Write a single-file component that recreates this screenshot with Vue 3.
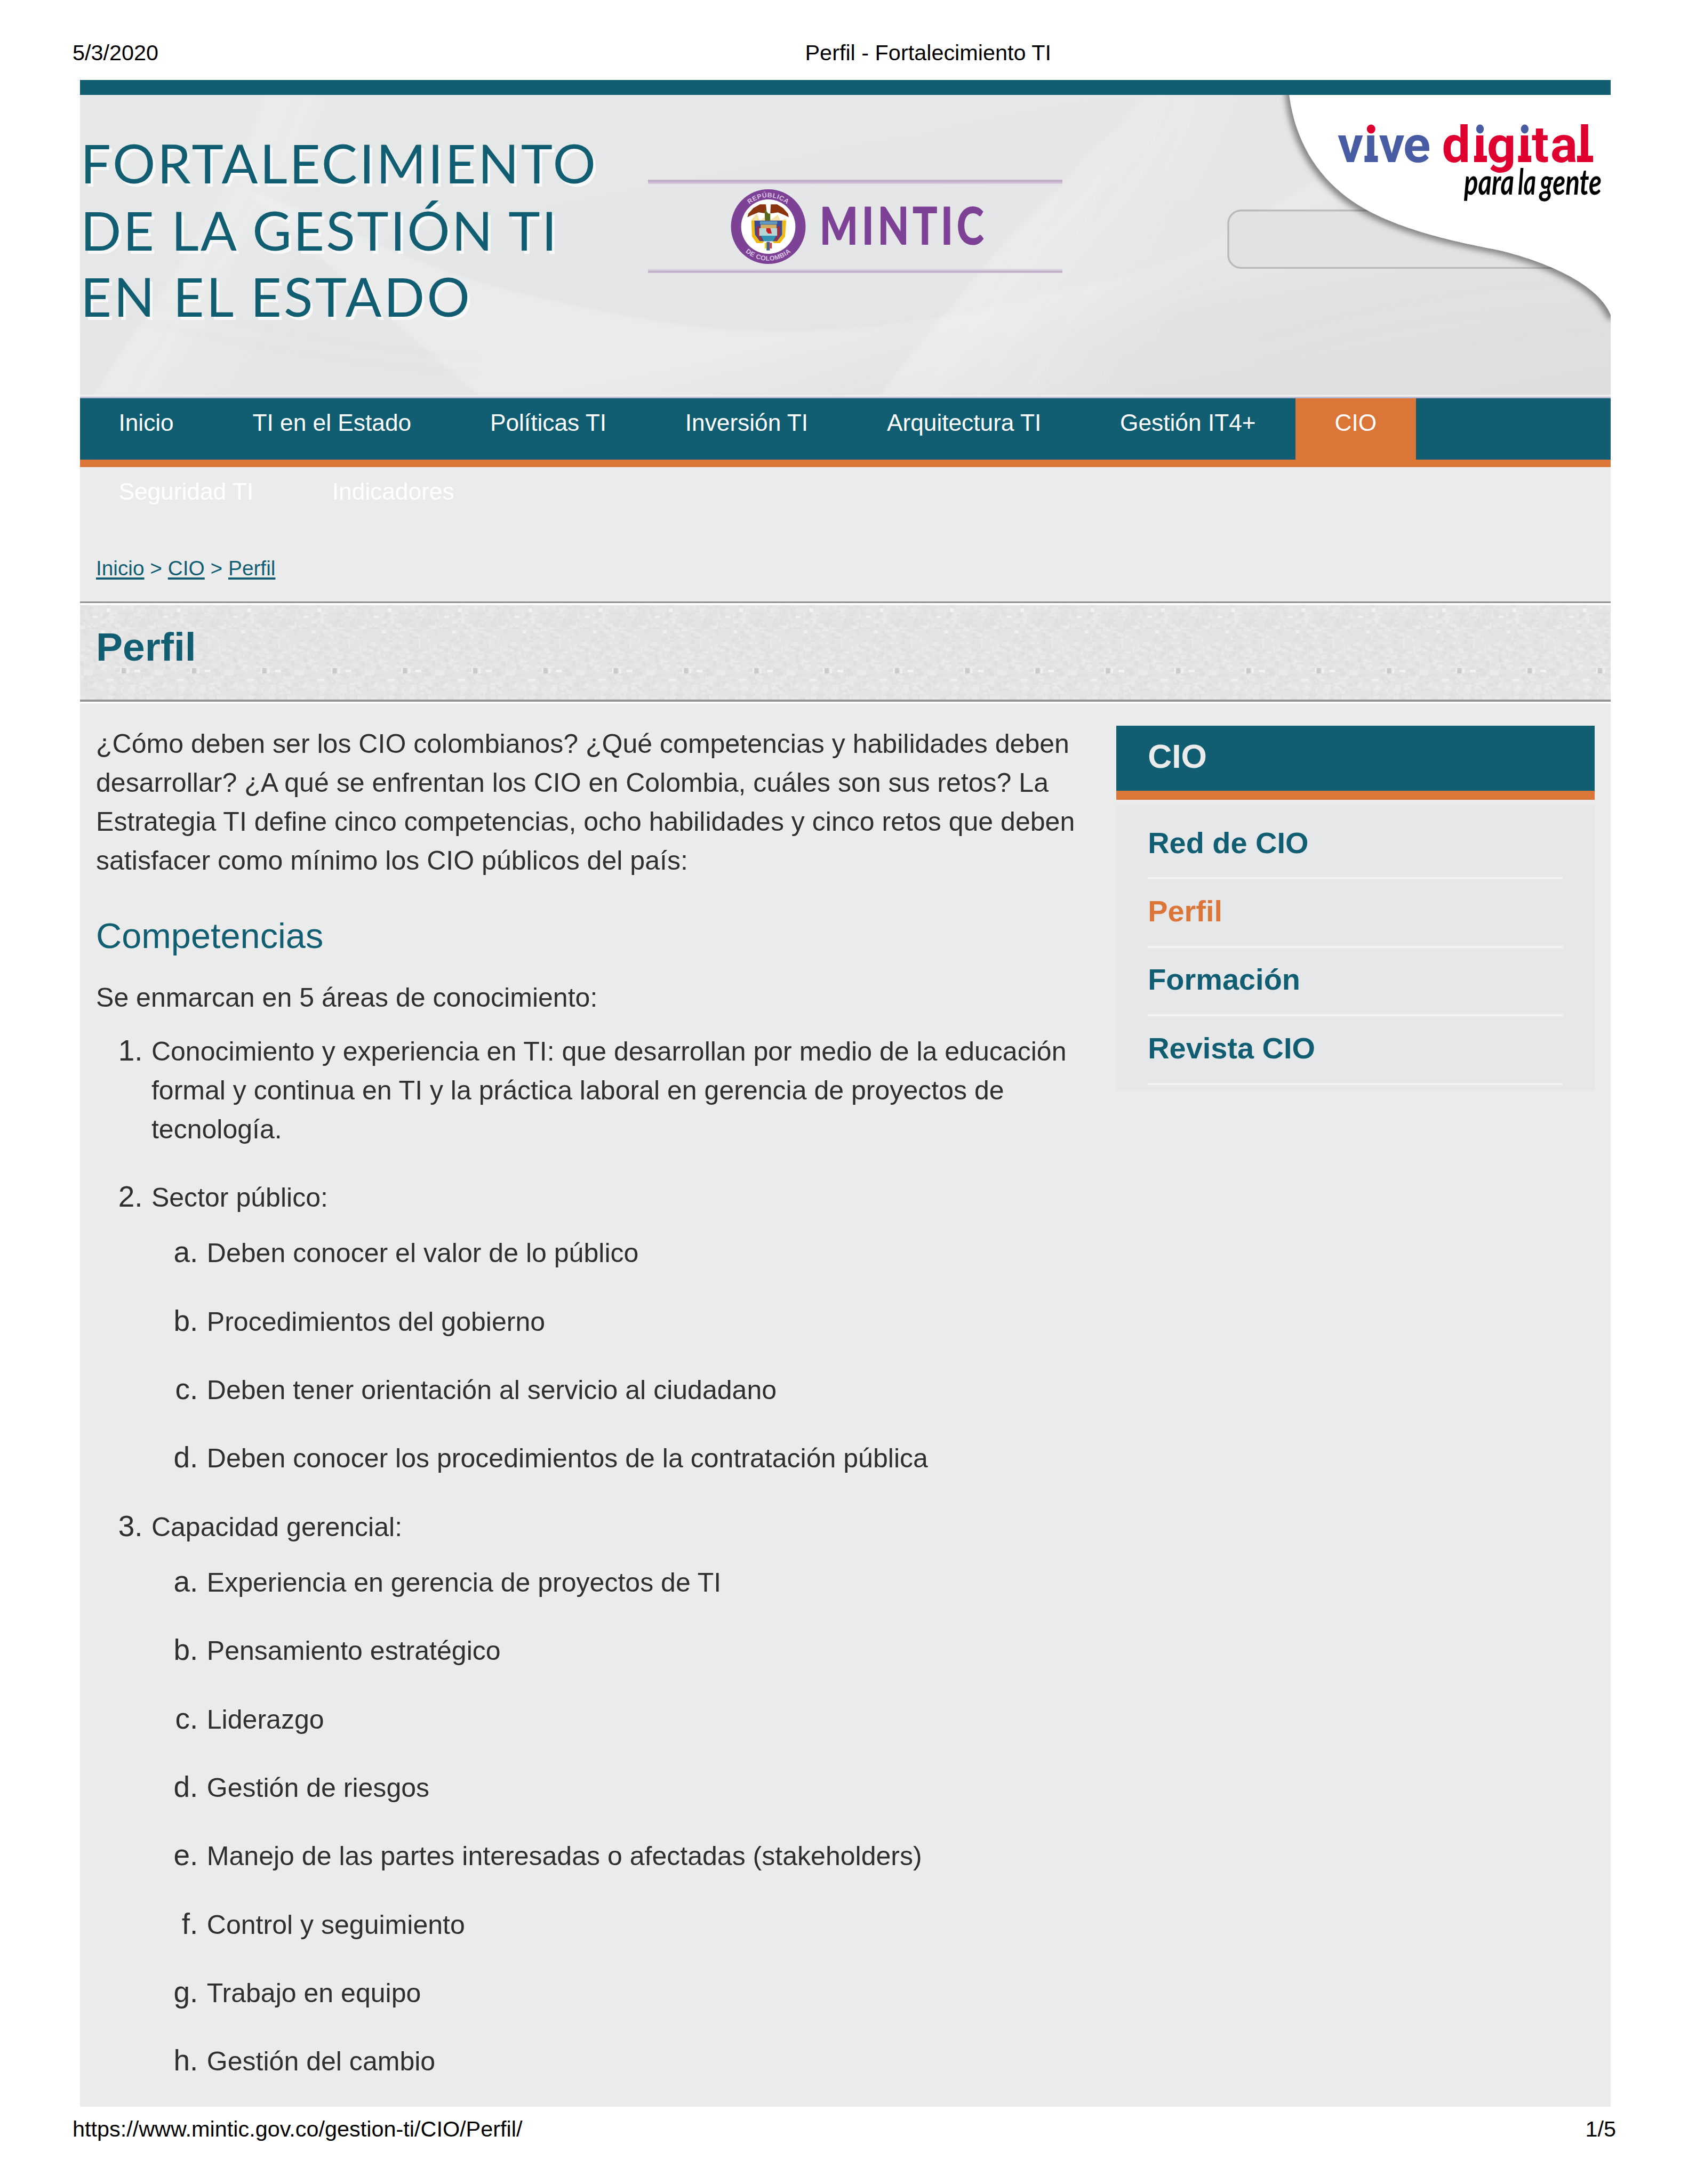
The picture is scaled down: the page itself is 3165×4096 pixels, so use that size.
<script setup>
const menu = [
  'Inicio', 'TI en el Estado', 'Políticas TI', 'Inversión TI', 'Arquitectura TI',
  'Gestión IT4+', 'CIO', 'Seguridad TI', 'Indicadores',
]
const sideLinks = ['Red de CIO', 'Perfil', 'Formación', 'Revista CIO']

const areas = [
  {
    lines: [
      'Conocimiento y experiencia en TI: que desarrollan por medio de la educación',
      'formal y continua en TI y la práctica laboral en gerencia de proyectos de',
      'tecnología.',
    ],
  },
  {
    lines: ['Sector público:'],
    sub: [
      'Deben conocer el valor de lo público',
      'Procedimientos del gobierno',
      'Deben tener orientación al servicio al ciudadano',
      'Deben conocer los procedimientos de la contratación pública',
    ],
  },
  {
    lines: ['Capacidad gerencial:'],
    sub: [
      'Experiencia en gerencia de proyectos de TI',
      'Pensamiento estratégico',
      'Liderazgo',
      'Gestión de riesgos',
      'Manejo de las partes interesadas o afectadas (stakeholders)',
      'Control y seguimiento',
      'Trabajo en equipo',
      'Gestión del cambio',
    ],
  },
]
const letter = (i) => String.fromCharCode(97 + i)

// Paper grain of the title band: one tile of small specks, repeated
let seed = 7
const rand = () => (seed = (seed * 16807) % 2147483647) / 2147483647
const px = 3.47
const tones = ['#e0dddd', '#e0dede', '#e9e8e8', '#ececec', '#dedcdc', '#ebebeb']
const specks = Array.from({ length: 420 }, () => ({
  x: Math.floor(rand() * 38) * px,
  y: Math.floor(rand() * 51) * px,
  w: (1 + Math.floor(rand() * 3)) * px,
  h: (1 + Math.floor(rand() * 2)) * px,
  c: tones[Math.floor(rand() * tones.length)],
}))
</script>

<template>
  <div class="sheet">
    <div class="sheet-head">
      <span class="date">5/3/2020</span>
      <span>Perfil - Fortalecimiento TI</span>
    </div>

    <div class="frame">
      <div class="top-bar"></div>

      <svg class="banner" viewBox="150 177.5 2870 566" width="2870" height="566">
        <defs>
          <linearGradient id="bg" x1="0" y1="0" x2="1" y2="1">
            <stop offset="0" stop-color="#e7e8e8" />
            <stop offset=".6" stop-color="#e4e5e6" />
            <stop offset="1" stop-color="#dcdddf" />
          </linearGradient>
          <linearGradient id="beamL" gradientUnits="userSpaceOnUse" x1="330" y1="430" x2="560" y2="520">
            <stop offset="0" stop-color="#fff" stop-opacity=".2" />
            <stop offset="1" stop-color="#fff" stop-opacity="0" />
          </linearGradient>
          <linearGradient id="beamR" gradientUnits="userSpaceOnUse" x1="1890" y1="430" x2="2230" y2="560">
            <stop offset="0" stop-color="#fff" stop-opacity=".22" />
            <stop offset="1" stop-color="#fff" stop-opacity="0" />
          </linearGradient>
          <linearGradient id="arc" gradientUnits="userSpaceOnUse" x1="1700" y1="560" x2="1760" y2="743">
            <stop offset="0" stop-color="#fff" stop-opacity=".22" />
            <stop offset="1" stop-color="#fff" stop-opacity="0" />
          </linearGradient>
          <filter id="soft" x="-20%" y="-20%" width="140%" height="140%">
            <feGaussianBlur stdDeviation="8" />
          </filter>
          <filter id="edge" x="-5%" y="-5%" width="110%" height="110%">
            <feGaussianBlur stdDeviation="4" />
          </filter>
          <filter id="lift" x="-10%" y="-10%" width="120%" height="120%">
            <feDropShadow dx="-7" dy="6" stdDeviation="6" flood-color="#000" flood-opacity=".42" />
          </filter>
        </defs>
        <rect x="150" y="177.5" width="2870" height="566" fill="url(#bg)" />
        <g filter="url(#edge)">
          <path d="M496 177C461 300 411 373 347 478C300 560 230 650 176 743H520C500 600 560 400 700 177Z" fill="url(#beamL)" />
          <path d="M2150 177C2080 260 2030 290 1991 349C1930 400 1870 470 1824 523C1750 620 1690 680 1649 743H2200C2190 560 2250 330 2330 177Z" fill="url(#beamR)" />
          <path d="M450 350C560 390 640 425 731 469C900 540 1000 555 1117 582C1231 603 1330 621 1444 621C1560 621 1620 615 1687 605C1780 590 1850 580 1922 560C2000 540 2060 530 2105 516C2200 490 2260 460 2308 427C2380 390 2430 360 2500 320L2560 743H900Z" fill="url(#arc)" />
        </g>
        <g stroke="#fff" fill="none" stroke-width="5" opacity=".2" filter="url(#soft)">
          <path d="M2180 177C2130 300 1900 480 1740 743" />
          <path d="M2215 177C2180 330 1960 500 1830 743" />
          <path d="M2240 177C2200 360 2050 520 1920 743" />
          <path d="M530 177C480 370 330 560 210 743" />
          <path d="M580 177C500 400 360 560 260 743" />
        </g>
        <g stroke="#cfd1d3" fill="none" stroke-width="5" opacity=".18" filter="url(#edge)">
          <path d="M150 540C400 590 600 650 900 670" />
          <path d="M150 580C400 630 600 680 900 700" />
          <path d="M2360 640C2600 560 2800 540 3020 520" />
          <path d="M2360 680C2600 600 2800 580 3020 570" />
          <path d="M2360 720C2600 650 2800 630 3020 620" />
        </g>
        <rect x="150" y="740" width="2870" height="3.5" fill="#f0eff2" />

        <g class="site-name">
          <g fill="#f8f8f8" transform="translate(5 6)" aria-hidden="true">
            <use href="#l1" /><use href="#l2" /><use href="#l3" />
          </g>
          <g fill="#115e73">
            <text id="l1" x="151" y="343.8" textLength="966">FORTALECIMIENTO</text>
            <text id="l2" x="151" y="469" textLength="893">DE LA GESTIÓN TI</text>
            <text id="l3" x="151" y="593.6" textLength="730">EN EL ESTADO</text>
          </g>
        </g>

        <!-- MINTIC -->
        <rect x="1215" y="336.5" width="777" height="4" fill="#c2aec9" />
        <rect x="1215" y="340.5" width="777" height="3.5" fill="#cfbcd5" />
        <rect x="1215" y="504" width="777" height="3" fill="#d8d2de" />
        <rect x="1215" y="507" width="777" height="4.2" fill="#c2aec9" />
        <g transform="translate(1325.6 327.7) scale(.2482)">
          <circle cx="463" cy="390" r="282" fill="#7d4295" />
          <circle cx="463" cy="390" r="205" fill="#fff" />
          <path id="ringTop" d="M242 390A221 221 0 0 1 684 390" fill="none" />
          <path id="ringBottom" d="M206 390A257 257 0 0 0 720 390" fill="none" />
          <g class="ring">
            <text><textPath href="#ringTop" startOffset="50%" text-anchor="middle">REPÚBLICA</textPath></text>
            <text><textPath href="#ringBottom" startOffset="50%" text-anchor="middle">DE COLOMBIA</textPath></text>
          </g>
          <path d="M305 318L312 292L350 250L400 222H445L452 290L430 288L390 282L345 300Z" fill="#8a3510" />
          <path d="M618 318L612 292L575 250L530 222H482L478 290L500 288L535 282L580 300Z" fill="#8a3510" />
          <path d="M335 340L375 290L400 345L445 310L480 340L535 300L555 345L600 330L585 370H345Z" fill="#f6e3a4" />
          <path d="M435 255L462 290L478 292V345H438Z" fill="#5a6a1e" />
          <path d="M335 345H362V450L395 495H435L420 515H375L340 465Z" fill="#f0b90f" />
          <path d="M598 345H568V450L535 495H490L505 515H552L590 465Z" fill="#f0b90f" />
          <path d="M358 345H568V450L530 500H398L362 450Z" fill="#3d4a94" />
          <path d="M400 350H530V372H400Z" fill="#5f9cc0" />
          <path d="M378 385L400 395V460L420 495H398L378 450Z" fill="#a52c36" />
          <path d="M550 385L530 395V460L510 495H530L550 450Z" fill="#a52c36" />
          <path d="M405 375H525V402H405Z" fill="#d3ae62" />
          <path d="M395 402H530V460H395Z" fill="#b5d6d6" />
          <path d="M408 458H522L500 500H428Z" fill="#3492b4" />
          <path d="M448 402H478L490 442H462L448 425Z" fill="#c91d25" />
          <path d="M436 512H450V555H436Z" fill="#f2d51f" />
          <path d="M450 505H475V570H450Z" fill="#4a5f86" />
          <path d="M475 512H490V555H475Z" fill="#d53a43" />
        </g>
        <text class="mintic" transform="translate(1537 457.5) scale(.8 1)">MINTIC</text>

        <!-- Search box, partly behind the brand corner -->
        <rect x="2303" y="394.3" width="712" height="107.6" rx="24" fill="#e2e2e2" stroke="#b9b9b9" stroke-width="3.4" />

        <path d="M2415 150C2420 250 2465 340 2564 394C2650 440 2760 458 2820 471C2920 497 3002 540 3021 592L3060 592V150Z" fill="#fff" filter="url(#lift)" />
        <g class="vive">
          <text fill="#475ca2" y="303.5" x="2508 2557.5 2585.5 2631">vive</text>
          <text fill="#e0002f" y="303.5" x="2703.5 2762 2788 2845.8 2872 2907 2958.5">digital</text>
        </g>
        <g fill="#fff">
          <rect x="2556" y="226" width="30" height="26" />
          <rect x="2762" y="226" width="25" height="26" />
          <rect x="2846" y="226" width="26" height="26" />
        </g>
        <rect x="2558.5" y="291.5" width="25" height="12" fill="#475ca2" />
        <g fill="#e0002f">
          <rect x="2764" y="291.5" width="24" height="12" />
          <rect x="2846.5" y="291.5" width="24.5" height="12" />
          <rect x="2957" y="291.5" width="30" height="12" />
        </g>
        <ellipse cx="2570.8" cy="241.5" rx="8" ry="8.6" fill="#e0002f" />
        <ellipse cx="2775" cy="241.5" rx="7.2" ry="8.4" fill="#475ca2" />
        <ellipse cx="2858.8" cy="241.5" rx="7.2" ry="8.4" fill="#475ca2" />
        <g class="gente">
          <text x="2745" y="364" textLength="94" lengthAdjust="spacingAndGlyphs">para</text>
          <text x="2846" y="364" textLength="34" lengthAdjust="spacingAndGlyphs">la</text>
          <text x="2887" y="364" textLength="116" lengthAdjust="spacingAndGlyphs">gente</text>
        </g>
      </svg>

      <nav class="menu">
        <ul>
          <li v-for="m in menu" :key="m" :class="{ on: m === 'CIO' }"><a>{{ m }}</a></li>
        </ul>
      </nav>

      <div class="crumbs"><a>Inicio</a> &gt; <a>CIO</a> &gt; <a>Perfil</a></div>

      <div class="title-band">
        <svg class="grain" width="2870" height="181">
          <defs>
            <pattern id="grain" width="131.8" height="177" y="4" patternUnits="userSpaceOnUse">
              <rect width="132" height="177" fill="#e5e4e4" />
              <rect v-for="(s, i) in specks" :key="i" :x="s.x" :y="s.y" :width="s.w" :height="s.h" :fill="s.c" opacity=".75" />
              <rect x="50" y="6" width="7" height="7" fill="#f2f2f2" />
              <rect x="24" y="20" width="9" height="4" fill="#f1f1f1" />
              <rect x="39" y="47" width="7" height="6" fill="#f0f0f0" />
              <rect x="75" y="118" width="4" height="10" fill="#f0f0f0" />
              <rect x="78" y="118" width="8" height="10" fill="#cbc9c9" />
              <rect x="88" y="119" width="4" height="9" fill="#f1f1f1" />
              <rect x="102" y="121" width="11" height="5" fill="#f3f3f3" />
              <rect x="50" y="138" width="13" height="4" fill="#efefef" />
            </pattern>
          </defs>
          <rect width="2870" height="4" fill="#fff" />
          <rect y="4" width="2870" height="177" fill="url(#grain)" />
        </svg>
        <h1>Perfil</h1>
      </div>

      <div class="columns">
        <main>
          <p>
            ¿Cómo deben ser los CIO colombianos? ¿Qué competencias y habilidades deben<br />
            desarrollar? ¿A qué se enfrentan los CIO en Colombia, cuáles son sus retos? La<br />
            Estrategia TI define cinco competencias, ocho habilidades y cinco retos que deben<br />
            satisfacer como mínimo los CIO públicos del país:
          </p>
          <h2>Competencias</h2>
          <p>Se enmarcan en 5 áreas de conocimiento:</p>
          <ul class="list">
            <li v-for="(a, i) in areas" :key="i">
              <span class="mark">{{ i + 1 }}.</span>
              <div>
                <p><template v-for="(l, j) in a.lines" :key="j"><br v-if="j" />{{ l }}</template></p>
                <ul v-if="a.sub" class="list sub">
                  <li v-for="(s, k) in a.sub" :key="k">
                    <span class="mark">{{ letter(k) }}.</span>
                    <p>{{ s }}</p>
                  </li>
                </ul>
              </div>
            </li>
          </ul>
        </main>

        <aside>
          <h3>CIO</h3>
          <ul>
            <li v-for="s in sideLinks" :key="s" :class="{ on: s === 'Perfil' }">{{ s }}</li>
          </ul>
        </aside>
      </div>
    </div>

    <div class="sheet-foot">
      <span>https://www.mintic.gov.co/gestion-ti/CIO/Perfil/</span>
      <span>1/5</span>
    </div>
  </div>
</template>

<style>
body { margin: 0; background: #fff; }
</style>

<style scoped>
.sheet {
  width: 3165px;
  height: 4096px;
  overflow: hidden;
  background: #fff;
  font-family: "Liberation Sans", Arial, sans-serif;
  color: #2f2f2f;
}
ul, p, h1, h2, h3 { margin: 0; padding: 0; list-style: none; }

.sheet-head {
  display: flex;
  padding: 69px 0 0 136px;
  height: 80.5px;
  font-size: 41.4px;
  line-height: 60px;
  color: #000;
}
.date { width: 1373.5px; }
.sheet-foot {
  display: flex;
  justify-content: space-between;
  padding: 12px 135px 0 136px;
  font-size: 41.4px;
  line-height: 60px;
  color: #000;
}

.frame {
  width: 2870px;
  height: 3801px;
  margin-left: 150px;
  background: #ebebeb;
  overflow: hidden;
}
.top-bar { height: 28px; background: #115e73; }
.banner { display: block; }
.site-name { font: 400 100.5px Lato, sans-serif; }
.mintic {
  font: 700 95px Lato, sans-serif;
  letter-spacing: 9px;
  fill: #7d4295;
  stroke: #7d4295;
  stroke-width: 2;
  stroke-linejoin: round;
}
.ring { font: 700 50px "Liberation Sans", sans-serif; letter-spacing: 2px; fill: #d9c3e2; }
.vive { font: 700 95px Roboto, sans-serif; }
.gente { font: italic 700 67px Lato, sans-serif; fill: #000; }

.menu {
  height: 115px;
  border-top: 3px solid #b9b9d1;
  border-bottom: 14.5px solid #db7638;
  background: #115e73;
}
.menu ul { display: flex; flex-wrap: wrap; }
.menu li {
  height: 129.2px;
  padding: 0 73.9px;
  font-size: 44.25px;
  line-height: 92px;
  color: #fff;
}
.menu li:first-child, .menu li:nth-child(8) { padding-left: 72.4px; }
.menu li.on { background: #db7638; }

.crumbs {
  height: 92px;
  padding: 160.5px 0 0 30px;
  font-size: 38.8px;
  line-height: 60px;
  color: #115e73;
}
.crumbs a {
  text-decoration: underline;
  text-decoration-thickness: 3.5px;
  text-underline-offset: 4px;
}

.title-band {
  position: relative;
  height: 181px;
  border-top: 3px solid #8f918f;
  border-bottom: 4px solid #949494;
  box-shadow: 0 3.5px 0 #fff;
}
.grain {
  position: absolute;
  top: 0;
  left: 0;
  display: block;
}
h1 {
  position: relative;
  padding: 32px 0 0 30px;
  font-size: 75px;
  line-height: 100px;
  color: #115e73;
}

.columns { display: flex; justify-content: space-between; padding: 0 30.5px 0 30px; }
main { padding-top: 43px; font-size: 50.05px; line-height: 73px; white-space: nowrap; }
h2 {
  margin: 64px 0 40px;
  font-size: 66.7px;
  font-weight: 400;
  line-height: 80px;
  color: #115e73;
}
.list { margin-top: 28px; }
.list li { display: flex; align-items: baseline; margin-bottom: 55.4px; }
.list li:last-child { margin-bottom: 0; }
.list.sub { margin-top: 30.9px; }
.mark {
  box-sizing: border-box;
  width: 103.9px;
  padding-right: 16.4px;
  text-align: right;
  font-size: 55px;
  line-height: 50px;
}

aside { width: 896.3px; margin-top: 45.2px; }
h3 {
  height: 103.4px;
  padding: 18.2px 0 0 59px;
  border-bottom: 17.1px solid #db7638;
  background: #115e73;
  color: #ebebeb;
  font-size: 62.3px;
  line-height: 80px;
}
aside ul { margin-top: 10.4px; padding: 10.8px 59.5px 10px 59px; background: #e6e7e8; }
aside li {
  padding: 19.6px 0 25px;
  border-bottom: 4px solid #f2f3f4;
  font-size: 55.9px;
  font-weight: 700;
  line-height: 79.8px;
  color: #115e73;
}
aside li.on { color: #db7638; }
</style>
